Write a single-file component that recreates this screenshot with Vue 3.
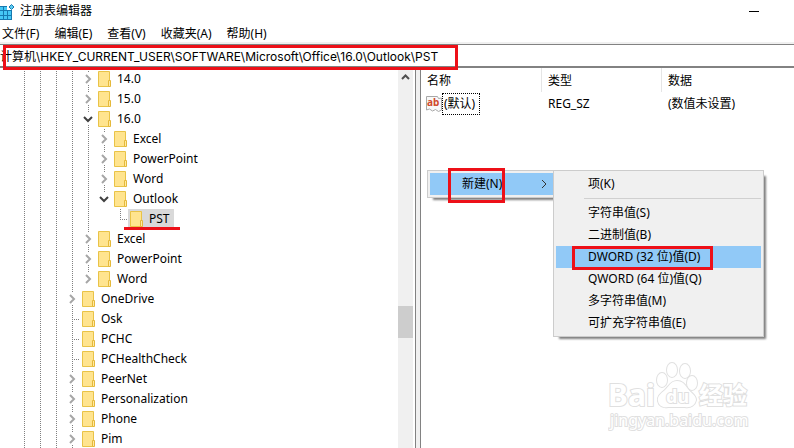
<script setup>
import { ref } from 'vue'

const menus = ['文件(F)', '编辑(E)', '查看(V)', '收藏夹(A)', '帮助(H)']
const address = ref('计算机\\HKEY_CURRENT_USER\\SOFTWARE\\Microsoft\\Office\\16.0\\Outlook\\PST')
const selected = ref('PST')

// guides: one entry per level on the left, 1 = dotted line, 0 = empty
// node: closed, open, or leaf (only the connecting elbow)
const rows = [
  { name: '14.0', guides: [1, 1, 1, 1], node: 'closed' },
  { name: '15.0', guides: [1, 1, 1, 1], node: 'closed' },
  { name: '16.0', guides: [1, 1, 1, 1], node: 'open' },
  { name: 'Excel', guides: [1, 1, 1, 1, 1], node: 'closed' },
  { name: 'PowerPoint', guides: [1, 1, 1, 1, 1], node: 'closed' },
  { name: 'Word', guides: [1, 1, 1, 1, 1], node: 'closed' },
  { name: 'Outlook', guides: [1, 1, 1, 1, 1], node: 'open', last: true },
  { name: 'PST', guides: [1, 1, 1, 1, 1, 0], node: 'leaf', last: true },
  { name: 'Excel', guides: [1, 1, 1, 1], node: 'closed' },
  { name: 'PowerPoint', guides: [1, 1, 1, 1], node: 'closed' },
  { name: 'Word', guides: [1, 1, 1, 1], node: 'closed', last: true },
  { name: 'OneDrive', guides: [1, 1, 1], node: 'closed' },
  { name: 'Osk', guides: [1, 1, 1], node: 'leaf' },
  { name: 'PCHC', guides: [1, 1, 1], node: 'leaf' },
  { name: 'PCHealthCheck', guides: [1, 1, 1], node: 'leaf' },
  { name: 'PeerNet', guides: [1, 1, 1], node: 'closed' },
  { name: 'Personalization', guides: [1, 1, 1], node: 'closed' },
  { name: 'Phone', guides: [1, 1, 1], node: 'closed' },
  { name: 'Pim', guides: [1, 1, 1], node: 'closed' }
]

const newItems = ['字符串值(S)', '二进制值(B)', 'DWORD (32 位)值(D)', 'QWORD (64 位)值(Q)', '多字符串值(M)', '可扩充字符串值(E)']
const active = ref(2)
</script>

<template>
  <div class="window">
    <header class="title-bar">
      <svg class="app-icon" width="15" height="18" viewBox="0 0 15 18">
        <path d="M0 4h7v4h5v10H0z" fill="#1779b0" />
        <path d="M0 5h3v3H0zM4 5h3v3H4zM0 9h3v4H0zM4 9h3v4H4zM8 9h3v4H8zM0 14h3v3H0zM4 14h3v3H4zM8 14h3v3H8z" fill="#45c8f5" />
        <path d="M11.500 2.500l2.500 2.500-2.500 2.500L9 5z" fill="#5ccbf2" stroke="#1779b0" />
      </svg>
      <h1>注册表编辑器</h1>
      <button class="minimize" type="button" aria-label="最小化"></button>
    </header>

    <nav class="menu-bar">
      <button v-for="m in menus" :key="m" type="button">{{ m }}</button>
    </nav>

    <div class="address">
      <input v-model="address" type="text" aria-label="地址" spellcheck="false" />
      <span class="mark mark-address"></span>
    </div>

    <main class="panes">
      <section class="tree-pane">
        <ul class="tree">
          <li v-for="(row, i) in rows" :key="i">
            <span v-for="(g, k) in row.guides" :key="k" class="guide" :class="{ line: g }"></span>
            <span class="node line" :class="[row.node, { last: row.last }]">
              <svg v-if="row.node === 'closed'" width="10" height="12" viewBox="0 0 10 12">
                <path d="M3 2l4 4-4 4" fill="none" stroke="#a6a6a6" stroke-width="2" />
              </svg>
              <svg v-if="row.node === 'open'" width="10" height="12" viewBox="0 0 10 12">
                <path d="M1 4l4 4 4-4" fill="none" stroke="#404040" stroke-width="2" />
              </svg>
            </span>
            <button
              class="key"
              :class="{ selected: row.name === selected }"
              type="button"
              @click="selected = row.name"
            >
              <svg width="13" height="16" viewBox="0 0 13 16">
                <path d="M.5.500h11v15H.5z" fill="#ffe48f" stroke="#e9c347" />
                <path d="M10.500 9.500h2v6h-2z" fill="#ffe9a2" stroke="#e5b93a" />
              </svg>
              <span>{{ row.name }}</span>
              <i v-if="row.name === 'PST'" class="underline"></i>
            </button>
          </li>
        </ul>
        <div class="scrollbar">
          <svg width="15" height="18" viewBox="0 0 15 18">
            <path d="M4 11l3.500-3.500L11 11" fill="none" stroke="#505050" stroke-width="2" />
          </svg>
          <div class="thumb"></div>
        </div>
      </section>

      <section class="value-pane">
        <table>
          <thead>
            <tr>
              <th class="name">名称</th>
              <th class="type">类型</th>
              <th>数据</th>
            </tr>
          </thead>
          <tbody>
            <tr>
              <td class="name">
                <div class="value">
                  <svg width="16" height="16" viewBox="0 0 16 16">
                    <path d="M.5.500h11l1 2 3-.5v12l-3 1.500-3-2-3 1.500-3-2-3 1z" fill="#f8f8f8" stroke="#a8a8a8" />
                    <text x="1" y="10" class="ab">ab</text>
                  </svg>
                  <span>(默认)</span>
                </div>
              </td>
              <td>REG_SZ</td>
              <td>(数值未设置)</td>
            </tr>
          </tbody>
        </table>

        <div class="context">
          <div class="menu parent">
            <button class="on" type="button">
              新建(N)
              <svg width="6" height="10" viewBox="0 0 6 10">
                <path d="M1 1l4 4-4 4" fill="none" stroke="#333" />
              </svg>
              <span class="mark mark-new"></span>
            </button>
          </div>
          <div class="menu child">
            <button type="button">项(K)</button>
            <hr />
            <button
              v-for="(item, i) in newItems"
              :key="item"
              :class="{ on: i === active }"
              type="button"
              @mouseenter="active = i"
            >
              {{ item }}
              <span v-if="i === 2" class="mark mark-dword"></span>
            </button>
          </div>
        </div>

        <svg class="watermark" width="150" height="76" viewBox="0 0 150 76">
          <g class="logo">
            <text x="0" y="45" class="latin">Bai</text>
            <ellipse cx="54" cy="19" rx="5" ry="7" />
            <ellipse cx="64" cy="9" rx="5" ry="7" />
            <ellipse cx="77" cy="10" rx="5" ry="7" />
            <ellipse cx="84" cy="22" rx="5" ry="7" />
            <path d="M69 20c-6 0-8 5-12 9-5 4-8 7-7 11 1 5 5 7 10 6h17c6 1 10-2 11-7 0-5-5-7-8-11-3-4-5-8-11-8z" />
            <text x="58" y="42" class="du">du</text>
            <text x="91" y="43" class="cjk">经验</text>
            <text x="2" y="65" class="site">jingyan.baidu.com</text>
          </g>
        </svg>
      </section>
    </main>
  </div>
</template>

<style>
body {
  margin: 0;
}
</style>

<style scoped>
.window {
  display: flex;
  flex-direction: column;
  height: 100vh;
  overflow: hidden;
  background: #fff;
  color: #000;
  font-family: "Noto Sans", "Noto Sans CJK SC", sans-serif;
  font-size: 12px;
  line-height: 20px;
}

button,
input {
  margin: 0;
  padding: 0;
  border: 0;
  background: none;
  color: inherit;
  font: inherit;
  text-align: left;
}

svg {
  display: block;
  flex: none;
}

.title-bar {
  display: flex;
  align-items: center;
  height: 22px;
}

.app-icon {
  margin-right: 5px;
}

h1 {
  flex: 1;
  margin: 0;
  font-size: 12px;
  font-weight: normal;
}

.minimize {
  width: 10px;
  height: 1px;
  margin-right: 35px;
  background: #000;
}

.menu-bar {
  display: flex;
  gap: 15px;
  height: 20px;
  padding: 2px 2px 0;
}

.address {
  position: relative;
  height: 21px;
  border-top: 1px solid #828282;
  border-bottom: 2px solid #828282;
  box-shadow: 0 -2px #f0f0f0;
}

.address input {
  display: block;
  width: 100%;
  height: 21px;
  outline: 0;
  font-family: Inter, "Noto Sans CJK SC", sans-serif;
}

.mark {
  position: absolute;
  box-sizing: border-box;
  border: 3px solid #ed1018;
  pointer-events: none;
}

.mark-address {
  top: 0;
  left: 3px;
  z-index: 2;
  width: 455px;
  height: 25px;
}

.panes {
  display: flex;
  flex: 1;
  min-height: 0;
}

.tree-pane {
  display: flex;
  flex: 0 0 415px;
  border-right: 1px solid #828282;
  overflow: hidden;
}

.tree {
  flex: 1;
  margin: 0;
  padding: 1px 0 0 16px;
  list-style: none;
}

.tree li {
  display: flex;
  height: 20px;
}

.guide,
.node {
  position: relative;
  flex: none;
  width: 16px;
}

.line::before {
  content: "";
  position: absolute;
  top: 0;
  bottom: 0;
  left: 8px;
  width: 1px;
  background: repeating-linear-gradient(#808080 0 1px, transparent 1px 2px);
}

.node.last::before {
  bottom: 10px;
}

.node svg {
  position: relative;
  margin: 4px 3px;
  background: #fff;
}

.leaf::after {
  content: "";
  position: absolute;
  top: 10px;
  left: 8px;
  width: 8px;
  height: 1px;
  background: repeating-linear-gradient(90deg, #808080 0 1px, transparent 1px 2px);
}

.key {
  position: relative;
  display: flex;
  align-items: center;
  gap: 4px;
  height: 20px;
  padding-left: 2px;
}

.key span {
  padding: 0 4px 0 2px;
}

.key.selected {
  background: #d9d9d9;
}

.underline {
  position: absolute;
  right: -6px;
  bottom: -1px;
  left: -4px;
  height: 3px;
  background: #ed1018;
}

.scrollbar {
  width: 15px;
  margin-right: 2px;
  background: #f0f0f0;
}

.thumb {
  height: 32px;
  margin-top: 220px;
  background: #cdcdcd;
}

.value-pane {
  position: relative;
  flex: 1;
  min-width: 0;
  margin-left: 4px;
  border-left: 1px solid #828282;
  box-shadow: -4px 0 #f0f0f0;
}

table {
  width: 100%;
  table-layout: fixed;
  border-spacing: 0;
}

th,
td {
  padding: 1px 0 0 6px;
  font-weight: normal;
  text-align: left;
  white-space: nowrap;
}

th {
  height: 23px;
  border-left: 1px solid #e5e5e5;
}

th.name {
  border-left: 0;
}

.name {
  width: 114px;
}

.type {
  width: 113px;
}

td {
  height: 22px;
  padding-left: 7px;
}

td.name {
  padding-left: 5px;
}

.value {
  display: flex;
  align-items: center;
  gap: 1px;
}

.value span {
  padding: 0 4px 0 1px;
  outline: 1px dotted #000;
}

.ab {
  fill: #d0492b;
  font: bold 10px "Noto Sans", sans-serif;
}

.context {
  position: absolute;
  top: 102px;
  left: 6px;
  display: flex;
  align-items: flex-start;
}

.menu {
  box-sizing: border-box;
  padding: 2px;
  border: 1px solid #ccc;
  background: #f0f0f0;
  box-shadow: 4px 4px 2px -2px #808080;
}

.menu button {
  position: relative;
  display: flex;
  align-items: center;
  width: 100%;
  height: 22px;
  padding-left: 32px;
  white-space: nowrap;
}

.menu .on {
  background: #91c9f7;
}

.parent {
  width: 126px;
  padding-right: 0;
  border-right: 0;
}

.parent button {
  justify-content: space-between;
  padding-right: 6px;
}

.child {
  position: relative;
  width: 211px;
}

.menu hr {
  margin: 3px 0 3px 28px;
  border: 0;
  border-top: 1px solid #d0d0d0;
}

.mark-new {
  top: -5px;
  left: 18px;
  z-index: 2;
  width: 57px;
  height: 35px;
}

.mark-dword {
  top: 0;
  left: 16px;
  width: 141px;
  height: 24px;
  z-index: 2;
}

.watermark {
  position: absolute;
  right: 36px;
  bottom: 11px;
}

.logo {
  fill: #fff;
  stroke: #e0e0e0;
  stroke-width: 2px;
  paint-order: stroke;
}

.latin {
  font: bold 30px "Noto Sans", sans-serif;
}

.du {
  font: bold 18px "Noto Sans", sans-serif;
}

.cjk {
  font: bold 24px "Noto Sans CJK SC", sans-serif;
}

.site {
  font: 16px "Noto Sans", sans-serif;
}
</style>
